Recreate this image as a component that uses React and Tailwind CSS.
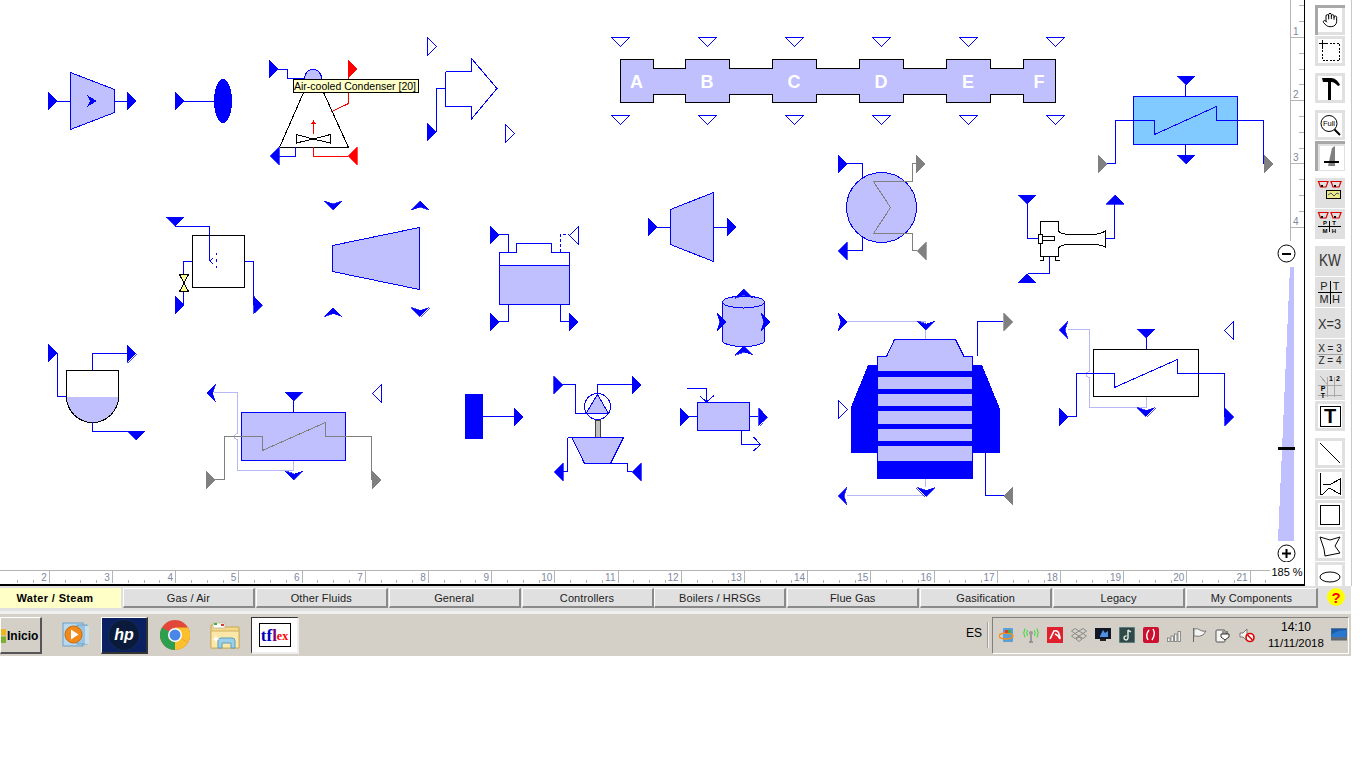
import React from 'react';
import { Hand } from 'lucide-react';

const B = '#0000ff', F = '#c0c0ff', G = '#808080', R = '#ff0000', LB = '#b8b8f4', K = '#000000';

function P({ d, x, y, c = B, o, ch }) {
  let pts;
  if (d === 'R') pts = ch ? [[x, y], [x + 9, y + 9], [x, y + 18], [x + 3, y + 9]] : [[x, y], [x + 9, y + 9], [x, y + 18]];
  if (d === 'L') pts = ch ? [[x + 9, y], [x, y + 9], [x + 9, y + 18], [x + 6, y + 9]] : [[x + 9, y], [x, y + 9], [x + 9, y + 18]];
  if (d === 'D') pts = ch ? [[x, y], [x + 9, y + 3], [x + 18, y], [x + 9, y + 9]] : [[x, y], [x + 18, y], [x + 9, y + 9]];
  if (d === 'U') pts = ch ? [[x + 9, y], [x + 18, y + 9], [x + 9, y + 6], [x, y + 9]] : [[x + 9, y], [x + 18, y + 9], [x, y + 9]];
  return <polygon points={pts.map(p => p.join(',')).join(' ')} fill={o ? 'none' : c} stroke={c} strokeWidth={o ? 1 : 0.7} />;
}
const L = ({ p, c = B, w = 1, dash }) => <polyline points={p} fill="none" stroke={c} strokeWidth={w} strokeDasharray={dash} />;
const Pg = ({ p, f = F, c = B, w = 1 }) => <polygon points={p} fill={f} stroke={c} strokeWidth={w} />;
const Bx = ({ x, y, w, h, f = 'none', c = B }) => <rect x={x} y={y} width={w} height={h} fill={f} stroke={c} strokeWidth="1" />;

const headerBody = '620.5,59.5 653.5,59.5 653.5,68.5 685.5,68.5 685.5,59.5 729.5,59.5 729.5,68.5 772.5,68.5 772.5,59.5 816.5,59.5 816.5,68.5 859.5,68.5 859.5,59.5 903.5,59.5 903.5,68.5 946.5,68.5 946.5,59.5 990.5,59.5 990.5,68.5 1023.5,68.5 1023.5,59.5 1055.5,59.5 1055.5,102.5 1023.5,102.5 1023.5,94.5 990.5,94.5 990.5,102.5 946.5,102.5 946.5,94.5 903.5,94.5 903.5,102.5 859.5,102.5 859.5,94.5 816.5,94.5 816.5,102.5 772.5,102.5 772.5,94.5 729.5,94.5 729.5,102.5 685.5,102.5 685.5,94.5 653.5,94.5 653.5,102.5 620.5,102.5';

function Diagram() {
  return (
    <svg width="1290" height="570" viewBox="0 0 1290 570" shapeRendering="crispEdges" className="block">
      {/* turbine 1 */}
      <P d="R" x={48} y={92} />
      <L p="57,101.5 70,101.5" />
      <Pg p="70.5,72.5 114.5,89.5 114.5,112.5 70.5,129.5" />
      <polygon points="87,95 97,101 87,107 90,101" fill={B} />
      <L p="115,101.5 127,101.5" />
      <P d="R" x={127} y={92} />
      {/* ellipse */}
      <P d="R" x={175} y={92} />
      <L p="184,101.5 214,101.5" />
      <ellipse cx="223" cy="101" rx="9" ry="22" fill={B} />
      {/* ACC */}
      <P d="R" x={269} y={60} />
      <L p="278,69.5 287.5,69.5 287.5,78.5 304,78.5" />
      <path d="M304.5 79 C305 72 309 69.5 313 69.5 C317 69.5 321.5 72 321.5 79 Z" fill={F} stroke={B} />
      <P d="R" x={348} y={60} c={R} />
      <L p="348.5,78 348.5,103.5 331,112" c={R} />
      <L p="279.5,147.5 305.5,88 321.5,88 348.5,147.5 279.5,147.5" c={K} />
      <path d="M296.5 134.5 L313 139 L330.5 134.5 L330.5 143 L313 139 L296.5 143 Z" fill="none" stroke={K} />
      <L p="313.5,134 313.5,123" c={R} />
      <polygon points="311,124 313.5,120 316,124" fill={R} />
      <P d="L" x={270} y={147} />
      <L p="279,156.5 295.5,156.5 295.5,147" />
      <L p="313.5,147 313.5,156.5 348,156.5" c={R} />
      <P d="L" x={348} y={147} c={R} />
      {/* outline arrow */}
      <P d="R" x={427.5} y={37.5} o />
      <P d="R" x={505.5} y={124.5} o />
      <L p="445.5,71.5 471.5,71.5 471.5,58.5 497,88.5 471.5,119 471.5,106.5 445.5,106.5 445.5,71.5" />
      <L p="436.5,132 436.5,88.5 445.5,88.5" />
      <P d="R" x={427} y={123} />
      {/* header */}
      <polygon points={headerBody} fill={F} stroke={K} strokeWidth="1" />
      {[620, 707, 794, 881, 968, 1055].map(x => <P key={x} d="D" x={x - 8.5} y={37.5} o />)}
      {[620, 707, 794, 881, 968, 1055].map(x => <P key={x} d="D" x={x - 8.5} y={115.5} o />)}
      <g fill="#ffffff" fontFamily="'Liberation Sans', sans-serif" fontWeight="700" fontSize="18" textAnchor="middle" shapeRendering="auto">
        <text x="636.5" y="88">A</text>
        <text x="707" y="88">B</text>
        <text x="794" y="88">C</text>
        <text x="881" y="88">D</text>
        <text x="968" y="88">E</text>
        <text x="1039" y="88">F</text>
      </g>
      {/* blue exchanger */}
      <Bx x={1133.5} y={96.5} w={104} h={48} f="#80caff" />
      <P d="D" x={1177} y={76} />
      <L p="1185.5,85 1185.5,96" />
      <L p="1185.5,144 1185.5,155" />
      <P d="D" x={1177} y={155} />
      <L p="1107,163.5 1115.5,163.5 1115.5,120.5 1154.5,120.5 1154.5,134.5 1216.5,106.5 1216.5,120.5 1263.5,120.5 1263.5,163.5" />
      <P d="R" x={1098} y={155} c={G} />
      <P d="R" x={1264} y={155} c={G} />
      {/* mixer */}
      <P d="D" x={166} y={217} />
      <L p="175,226.5 209.5,226.5 209.5,261" />
      <L p="213,258 210,261 213,264" />
      <L p="216.5,253 216.5,255" />
      <L p="216.5,259 216.5,262" />
      <L p="216.5,266 216.5,268" />
      <rect x="192.5" y="235.5" width="52" height="52" fill="none" stroke={K} />
      <L p="192,261.5 183.5,261.5 183.5,274" />
      <polygon points="179.5,274.5 188.5,274.5 184,283 188.5,291.5 179.5,291.5 184,283" fill="#ffff99" stroke={K} />
      <L p="183.5,292 183.5,305" />
      <P d="R" x={175} y={296} />
      <L p="244.5,261.5 253.5,261.5 253.5,305" />
      <P d="R" x={253.5} y={296} />
      {/* cone */}
      <Pg p="332.5,245.5 419.5,227.5 419.5,289.5 332.5,271.5" />
      <P d="D" x={324} y={201} ch />
      <P d="U" x={411} y={201} ch />
      <P d="U" x={324} y={307.5} ch />
      <P d="D" x={411} y={307.5} ch />
      {/* tank */}
      <P d="R" x={490} y={226} />
      <L p="499,234.5 508.5,234.5 508.5,252" />
      <rect x="499.5" y="265.5" width="70" height="39" fill={F} />
      <path d="M516.5 252.5 V243.5 H551.5 V252.5 H569.5 V304.5 H499.5 V252.5 Z" fill="none" stroke={B} />
      <L p="499.5,265.5 569.5,265.5" />
      <L p="560.5,252 560.5,234.5 569,234.5" dash="3 2" />
      <P d="L" x={569.5} y={226.5} o />
      <P d="R" x={490} y={313} />
      <L p="499,321.5 508.5,321.5 508.5,304" />
      <L p="560.5,304 560.5,321.5 569,321.5" />
      <P d="R" x={569} y={313} />
      {/* turbine 3 */}
      <P d="R" x={648} y={218} />
      <L p="657,227.5 670,227.5" />
      <Pg p="670.5,209.5 713.5,192.5 713.5,261.5 670.5,244.5" />
      <L p="714,227.5 727,227.5" />
      <P d="R" x={727} y={218} />
      {/* circle exch */}
      <circle cx="881.5" cy="207.5" r="35" fill={F} stroke={B} />
      <P d="R" x={838} y={155} />
      <L p="846,163.5 862.5,163.5 862.5,177" />
      <P d="L" x={838} y={242} />
      <L p="846,250.5 862.5,250.5 862.5,236" />
      <L p="916,163.5 912.5,163.5 912.5,181.5 873.5,181.5 890.5,207.5 873.5,233.5 912.5,233.5 912.5,250.5 917,250.5" c={G} />
      <P d="R" x={916} y={155} c={G} />
      <P d="L" x={917} y={242} c={G} />
      {/* horn */}
      <P d="D" x={1018} y={195} />
      <L p="1027.5,204 1027.5,238.5 1038,238.5" />
      <P d="U" x={1106} y={195} />
      <L p="1114.5,204 1114.5,238.5 1105,238.5" />
      <path d="M1040.5 234 V221.5 H1058.5 V231 Q1060 234 1070 234.5 H1093 Q1102 234 1105.5 230.5 V247.5 Q1102 244.5 1093 244.5 H1070 Q1060 244.5 1058.5 248 V256.5 H1040.5 V243" fill="none" stroke={K} />
      <rect x="1038.5" y="234.5" width="4" height="9" fill="none" stroke={K} />
      <L p="1043,236.5 1054,236.5" c={K} />
      <L p="1043,240.5 1054,240.5" c={K} />
      <L p="1054.5,236 1054.5,241" c={K} />
      <L p="1043.5,256 1043.5,260.5 1040,260.5" c={K} />
      <L p="1055.5,256 1055.5,260.5 1060,260.5" c={K} />
      <P d="U" x={1018} y={273.5} />
      <L p="1028,273.5 1049.5,273.5 1049.5,257" />
      {/* drum */}
      <rect x="722.5" y="302" width="42" height="39" fill={F} />
      <ellipse cx="743.5" cy="340.5" rx="21" ry="6" fill={F} stroke={B} />
      <rect x="723" y="302" width="41" height="38" fill={F} />
      <L p="722.5,302 722.5,341" />
      <L p="764.5,302 764.5,341" />
      <ellipse cx="743.5" cy="302" rx="21" ry="6" fill={F} stroke={B} />
      <P d="U" x={734.5} y={289} ch />
      <P d="U" x={734.5} y={346} ch />
      <P d="R" x={717} y={313} ch />
      <P d="R" x={761} y={313} ch />
      {/* flash */}
      <P d="R" x={48} y={344} />
      <L p="57.5,353 57.5,396.5 66,396.5" />
      <path d="M66.5 396.5 A26 26 0 0 0 118.5 396.5 Z" fill={F} />
      <path d="M66.5 396.5 V370.5 H118.5 V396.5 A26 26 0 0 1 66.5 396.5" fill="none" stroke={K} />
      <L p="92.5,370 92.5,353.5 127,353.5" />
      <P d="R" x={127} y={344.5} />
      <L p="92.5,422 92.5,431.5 127,431.5" />
      <P d="D" x={127} y={431} />
      {/* economizer */}
      <Bx x={241.5} y={412.5} w={104} h={48} f={F} />
      <P d="D" x={284.5} y={392} />
      <L p="293.5,401 293.5,412" />
      <L p="214,392.5 237.5,392.5 237.5,433 234,435.5 234,438 237.5,440 237.5,470.5 293.5,470.5 293.5,461" c={LB} />
      <P d="L" x={206.5} y={384} ch />
      <P d="D" x={284.5} y={471} ch />
      <P d="L" x={372.5} y={384.5} o />
      <L p="215,479.5 224.5,479.5 224.5,436.5 262.5,436.5 262.5,450.5 325.5,422.5 325.5,436.5 371.5,436.5 371.5,480" c={G} />
      <P d="R" x={206} y={471} c={G} />
      <P d="R" x={372} y={471} c={G} />
      {/* block */}
      <rect x="465" y="394" width="18" height="45" rx="1" fill={B} />
      <L p="483,416.5 514,416.5" />
      <P d="R" x={514} y={408} />
      {/* pump turbine */}
      <P d="R" x={553.5} y={376} />
      <L p="562,384.5 575.5,384.5 575.5,413.5 586,413.5" />
      <circle cx="597.5" cy="406.5" r="13" fill="#ffffff" stroke={B} />
      <Pg p="597.5,394.5 586,413.5 608.5,413.5" />
      <L p="597.5,394 597.5,384.5 632,384.5" />
      <P d="R" x={632} y={376} />
      <rect x="595.5" y="420" width="4.5" height="17" fill="#c0c0c0" stroke="#404040" />
      <L p="567.5,437.5 623.5,437.5" />
      <Pg p="572,437.5 623.5,437.5 610.5,463.5 584.5,463.5" />
      <L p="567.5,437.5 567.5,471.5 563,471.5" />
      <P d="L" x={554} y={463} />
      <L p="610.5,463.5 627.5,463.5 627.5,471.5 632,471.5" />
      <P d="L" x={632} y={463} />
      {/* small box */}
      <P d="R" x={680} y={408} />
      <L p="689,416.5 697,416.5" />
      <Bx x={697.5} y={402.5} w={52} h={28} f={F} />
      <L p="750,416.5 758,416.5" />
      <P d="R" x={758.5} y={408} />
      <L p="687,388.5 706.5,388.5 706.5,402" />
      <L p="700,396 706.5,402 714,395.5" />
      <L p="741.5,430.5 741.5,444.5 760.5,444.5" />
      <L p="753.5,437 760.5,444.5 753.5,451" />
      {/* big unit */}
      <L p="847,321.5 925.5,321.5 925.5,339" c={LB} />
      <P d="R" x={838} y={313} ch />
      <P d="D" x={916.5} y={321} ch />
      <polygon points="868,365 982,365 1000,409 1000,453 851,453 851,407" fill={B} />
      <rect x="877" y="371" width="96" height="108" fill={B} />
      <Pg p="886.5,356.5 894.5,339.5 955.5,339.5 964,356.5 972.5,356.5 972.5,371 877.5,371 877.5,356.5" />
      <rect x="878" y="377" width="94" height="12" fill={F} />
      <rect x="878" y="394" width="94" height="12" fill={F} />
      <rect x="878" y="411" width="94" height="13" fill={F} />
      <rect x="878" y="429" width="94" height="12" fill={F} />
      <rect x="878" y="446" width="94" height="15" fill={F} />
      <L p="977.5,356 977.5,321.5 1003,321.5" />
      <P d="R" x={1003.5} y={313} c={G} />
      <L p="985.5,453 985.5,495.5 1004,495.5" />
      <P d="L" x={1003.5} y={487} c={G} />
      <L p="925.5,479 925.5,487" c={LB} />
      <L p="925,495.5 847,495.5" c={LB} />
      <P d="D" x={916.5} y={487.5} ch />
      <P d="L" x={838} y={487} ch />
      <P d="R" x={838.5} y={400.5} o />
      {/* black econ */}
      <rect x="1093.5" y="349.5" width="105" height="47" fill="none" stroke={K} />
      <P d="D" x={1137} y={329} />
      <L p="1146.5,338 1146.5,349" />
      <L p="1068,329.5 1089.5,329.5 1089.5,371 1086,373 1086,376 1089.5,378 1089.5,407.5 1146.5,407.5 1146.5,397" c={LB} />
      <P d="L" x={1059} y={321} ch />
      <P d="D" x={1137} y={407.5} ch />
      <P d="L" x={1224.5} y={321.5} o />
      <L p="1067,416.5 1076.5,416.5 1076.5,373.5 1114.5,373.5 1114.5,387.5 1177.5,359.5 1177.5,373.5 1224.5,373.5 1224.5,416.5" />
      <P d="R" x={1059} y={408} />
      <P d="R" x={1224.5} y={408} />
    </svg>
  );
}

function RightRuler() {
  const minors = [5.4, 21.2, 52.8, 68.6, 84.4, 116, 131.8, 147.6, 179.2, 195, 210.8];
  const majors = [[1, 37], [2, 100], [3, 163], [4, 227]];
  return (
    <svg width="14" height="241" viewBox="0 0 14 241" shapeRendering="crispEdges" className="block">
      <line x1="0.5" y1="0" x2="0.5" y2="241" stroke="#b4b4b4" />
      {minors.map(y => <line key={y} x1="9" x2="14" y1={Math.round(y) + 0.5} y2={Math.round(y) + 0.5} stroke="#b4b4b4" />)}
      {majors.map(([n, y]) => <line key={n} x1="0" x2="14" y1={y + 0.5} y2={y + 0.5} stroke="#b4b4b4" />)}
      {majors.map(([n, y]) => <text key={n} x="3" y={y - 2} fontSize="10" fill="#8088a0" fontFamily="'Liberation Sans', sans-serif" shapeRendering="auto">{n}</text>)}
    </svg>
  );
}

function BottomRuler() {
  const nums = Array.from({ length: 20 }, (_, i) => i + 2);
  const ticks = [];
  for (let i = -2; i < 80; i++) {
    const x = 48.7 + 15.8 * i;
    if (i % 4 !== 0 && x > 0 && x < 1268) ticks.push(Math.round(x));
  }
  return (
    <svg width="1270" height="14" viewBox="0 0 1270 14" shapeRendering="crispEdges" className="block">
      <line x1="0" y1="0.5" x2="1270" y2="0.5" stroke="#b4b4b4" />
      {ticks.map(x => <line key={x} x1={x + 0.5} x2={x + 0.5} y1="10" y2="13" stroke="#b4b4b4" />)}
      {nums.map(n => {
        const x = 48.7 + 63.2 * (n - 2);
        return (
          <g key={n}>
            <line x1={Math.round(x) + 0.5} x2={Math.round(x) + 0.5} y1="0" y2="13" stroke="#b4b4b4" />
            <text x={x - 2} y="11" textAnchor="end" fontSize="10" fill="#8088a0" fontFamily="'Liberation Sans', sans-serif" shapeRendering="auto">{n}</text>
          </g>
        );
      })}
    </svg>
  );
}

function ZoomControl() {
  return (
    <div className="absolute right-0 bottom-0 w-[34px] h-[343px] flex flex-col items-center">
      <svg width="34" height="300" viewBox="0 0 34 300" shapeRendering="crispEdges" className="block">
        <circle cx="16.5" cy="12.5" r="8.5" fill="#fff" stroke={K} shapeRendering="auto" />
        <rect x="12" y="11.5" width="9" height="2" fill={K} />
        <polygon points="20,26 24,26 24,300 8,300" fill={F} />
        <rect x="8" y="206" width="17" height="3" fill={K} />
      </svg>
      <svg width="34" height="21" viewBox="0 0 34 21" className="block">
        <circle cx="16.5" cy="12.5" r="8.5" fill="#fff" stroke={K} />
        <rect x="12" y="11.5" width="9" height="2" fill={K} />
        <rect x="15.5" y="8" width="2" height="9" fill={K} />
      </svg>
      <div className="w-full h-[22px] bg-white pt-[3px] text-[11px] leading-[14px] text-black text-center whitespace-nowrap">185 %</div>
    </div>
  );
}

function ToolBtn({ children, mt, pressed, white = true, h = 'h-[30px]' }) {
  const cls = pressed
    ? 'border-t-[3px] border-l-[3px] border-t-[#a8a8a8] border-l-[#a8a8a8]'
    : '';
  return (
    <div className={`w-[30px] ${h} shrink-0 bg-[#e0e0e0] flex items-center justify-center ${mt ? 'mt-[7px]' : 'mt-px'} ${cls}`}>
      {white
        ? <div className="w-[24px] h-[24px] bg-white flex items-center justify-center">{children}</div>
        : children}
    </div>
  );
}

const Heat = () => (
  <g fill="none">
    <path d="M1.5 2.5 H11 L9 8 H3.5 Z" stroke="#e00000" strokeWidth="1.2" />
    <path d="M14 2.5 H24 L22 8 H16 Z" stroke="#e00000" strokeWidth="1.2" />
    <rect x="4" y="6" width="2" height="2" fill={K} />
    <rect x="17" y="6" width="2" height="2" fill={K} />
  </g>
);

function Toolbar() {
  return (
    <div className="w-[47px] h-[586px] overflow-hidden bg-white border-r border-[#c8c8c8] pl-[10px] pt-[5px] flex flex-col">
      <div className="w-[30px] h-[30px] shrink-0 bg-[#e0e0e0] border-t-[3px] border-l-[3px] border-t-[#a8a8a8] border-l-[#a8a8a8] flex items-start">
        <div className="w-[24px] h-[24px] bg-white flex items-center justify-center"><Hand size={16} strokeWidth={1.5} color="#000" /></div>
      </div>
      <ToolBtn>
        <svg width="24" height="24" viewBox="0 0 24 24" shapeRendering="crispEdges">
          <rect x="4.5" y="4.5" width="17" height="17" fill="none" stroke={K} strokeDasharray="2 1.5" />
          <path d="M4.5 1 V8 M1 4.5 H8" stroke={K} fill="none" />
        </svg>
      </ToolBtn>
      <ToolBtn mt>
        <svg width="24" height="24" viewBox="0 0 24 24">
          <polygon points="10,5 13,5 13,24 10,24" fill={K} />
          <path d="M4 2 H13 C17 2 20 5 22 9 L20 10 C18 8 16 6 13 6 H5 Z" fill={K} />
        </svg>
      </ToolBtn>
      <ToolBtn mt>
        <svg width="24" height="24" viewBox="0 0 24 24">
          <circle cx="11" cy="10.5" r="8" fill="none" stroke={K} />
          <text x="11" y="13" textAnchor="middle" fontSize="7.5" fontFamily="'Liberation Sans', sans-serif">Full</text>
          <path d="M16.5 16.5 L22 22" stroke={K} strokeWidth="2" />
        </svg>
      </ToolBtn>
      <ToolBtn pressed>
        <svg width="24" height="24" viewBox="0 0 24 24" className="bg-white">
          <polygon points="8,20 15,20 15,0 12,2" fill="#808080" />
          <rect x="4" y="15" width="15" height="2" fill={K} />
        </svg>
      </ToolBtn>
      <ToolBtn mt white={false}>
        <svg width="26" height="28" viewBox="0 0 26 28">
          <Heat />
          <rect x="9.5" y="11.5" width="14" height="8" fill="#e8e888" stroke={K} />
          <path d="M11 16 L14 14 L17 17 L20 14 L22 15" stroke="#556" fill="none" />
        </svg>
      </ToolBtn>
      <ToolBtn white={false}>
        <svg width="26" height="28" viewBox="0 0 26 28">
          <Heat />
          <path d="M1 16.5 H24 M12.5 11 V22" stroke={K} fill="none" />
          <g fontSize="6" fontWeight="700" fontFamily="'Liberation Sans', sans-serif" textAnchor="middle">
            <text x="8" y="15">P</text><text x="17" y="15">T</text>
            <text x="8" y="22.5">M</text><text x="17" y="22.5">H</text>
          </g>
        </svg>
      </ToolBtn>
      <ToolBtn mt white={false}>
        <span className="text-[16px] leading-none text-[#333] scale-x-[0.85]">KW</span>
      </ToolBtn>
      <ToolBtn white={false}>
        <svg width="26" height="28" viewBox="0 0 26 28" shapeRendering="crispEdges">
          <path d="M1 14.5 H25 M13.5 3 V26" stroke={K} fill="none" />
          <g fontSize="11" fontFamily="'Liberation Sans', sans-serif" textAnchor="middle" fill="#222" shapeRendering="auto">
            <text x="7" y="12">P</text><text x="19" y="12">T</text>
            <text x="7" y="25">M</text><text x="19" y="25">H</text>
          </g>
        </svg>
      </ToolBtn>
      <ToolBtn white={false}>
        <span className="text-[15px] leading-none text-[#333] whitespace-nowrap scale-x-[0.85]">X=3</span>
      </ToolBtn>
      <ToolBtn white={false}>
        <div className="flex flex-col items-center text-[10px] leading-[11px] text-[#222] whitespace-nowrap">
          <span className="border-b border-[#a0a0a0] px-px">X = 3</span>
          <span>Z = 4</span>
        </div>
      </ToolBtn>
      <ToolBtn white={false}>
        <svg width="26" height="28" viewBox="0 0 26 28" shapeRendering="crispEdges">
          <path d="M1 14.5 H25 M1 24.5 H25 M10.5 6 V26 M17.5 6 V26 M3 5 L10 13" stroke="#a8a8a8" fill="none" />
          <g fontSize="7" fontWeight="700" fontFamily="'Liberation Sans', sans-serif" textAnchor="middle" shapeRendering="auto">
            <text x="14" y="10">1</text><text x="21" y="10">2</text>
            <text x="6" y="20">P</text><text x="6" y="27">T</text>
          </g>
        </svg>
      </ToolBtn>
      <ToolBtn>
        <div className="w-[21px] h-[21px] border-[1.5px] border-black flex items-center justify-center text-[20px] leading-none font-bold text-black">T</div>
      </ToolBtn>
      <ToolBtn mt>
        <svg width="24" height="24" viewBox="0 0 24 24"><path d="M2 2 L22 22" stroke={K} fill="none" /></svg>
      </ToolBtn>
      <ToolBtn>
        <svg width="24" height="24" viewBox="0 0 24 24" shapeRendering="crispEdges"><path d="M2.5 1 V22 H5 L11 16 L22 22 V7 L13 12 H5" stroke={K} fill="none" /></svg>
      </ToolBtn>
      <ToolBtn>
        <svg width="24" height="24" viewBox="0 0 24 24" shapeRendering="crispEdges"><rect x="2.5" y="2.5" width="19" height="19" fill="none" stroke={K} /></svg>
      </ToolBtn>
      <ToolBtn>
        <svg width="24" height="24" viewBox="0 0 24 24"><path d="M2 3 L12 6 L22 3 L17 12 L22 19 L7 22 L6 15 L2 3" stroke={K} fill="none" /></svg>
      </ToolBtn>
      <ToolBtn>
        <svg width="24" height="24" viewBox="0 0 24 24"><ellipse cx="12" cy="12" rx="10" ry="5" stroke={K} fill="none" /></svg>
      </ToolBtn>
    </div>
  );
}

const tabs = ['Water / Steam', 'Gas / Air', 'Other Fluids', 'General', 'Controllers', 'Boilers / HRSGs', 'Flue Gas', 'Gasification', 'Legacy', 'My Components'];

function TabRow() {
  return (
    <div className="h-[25px] w-[1351px] bg-[#e0e0e0] relative flex pt-[2px] overflow-hidden">
      <div className="flex gap-[0.875px] -ml-[10px]">
        {tabs.map((t, i) => (
          <div
            key={t}
            className={`w-[132px] h-[20px] flex items-center justify-center text-[11px] text-[#222] ${i === 0 ? 'bg-[#ffffc8] font-bold tracking-[0.35px] text-black -translate-x-px' : 'tracking-[0.1px] bg-[#e0e0e0] pt-px border-t border-l border-white border-r-2 border-b-2 border-r-[#8a8a8a] border-b-[#8a8a8a]'}`}
          >
            {t}
          </div>
        ))}
      </div>
      <div className="absolute right-[6px] top-[2px] w-[18px] h-[18px] rounded-full bg-[#ffff00] flex items-center justify-center text-[15px] leading-none font-bold text-[#ff0000]">?</div>
    </div>
  );
}

function TrayIcon({ children }) {
  return <svg width="16" height="16" viewBox="0 0 16 16" className="shrink-0 block">{children}</svg>;
}

function Tray() {
  return (
    <div className="ml-[3px] w-[357px] h-[37px] border border-t-[#808080] border-l-[#808080] border-b-white border-r-white flex items-center pl-[6px] gap-[8px]">
      <TrayIcon>
        <rect x="4" y="1" width="10" height="14" rx="1" fill="#5a9fd8" />
        <ellipse cx="7" cy="9" rx="7" ry="3" fill="none" stroke="#f09020" strokeWidth="1.5" />
        <rect x="6" y="3" width="3" height="3" fill="#e04020" /><rect x="9" y="3" width="3" height="3" fill="#40b040" />
      </TrayIcon>
      <TrayIcon>
        <path d="M8 8 V15 M6 15 H10" stroke="#888" strokeWidth="1.5" fill="none" />
        <circle cx="8" cy="6" r="2" fill="#999" />
        <path d="M4.5 3 Q3 6 4.5 9 M11.5 3 Q13 6 11.5 9 M2 1.5 Q-0.5 6 2 10.5 M14 1.5 Q16.5 6 14 10.5" stroke="#39d833" fill="none" />
      </TrayIcon>
      <TrayIcon>
        <rect width="16" height="16" fill="#e0202c" />
        <path d="M3 12 L7 4 Q11 3 12 7 Q13 10 13 12 Q11 8 8 7" stroke="#fff" strokeWidth="1.6" fill="none" />
      </TrayIcon>
      <TrayIcon>
        <path d="M4 1.5 L8 4 L4 6.5 L0.5 4 Z M12 1.5 L15.5 4 L12 6.5 L8 4 Z M4 6.5 L8 9 L4 11.5 L0.5 9 Z M12 6.5 L15.5 9 L12 11.5 L8 9 Z M8 10 L11 12 L8 14.5 L5 12 Z" fill="#d4d0c8" stroke="#8a8a8a" />
      </TrayIcon>
      <TrayIcon>
        <rect y="1" width="16" height="11" fill="#101828" />
        <path d="M5 9 L8 3 L10 6 L13 4 V10 H5" fill="#5090e0" />
        <rect x="5" y="12" width="6" height="2" fill="#222" />
      </TrayIcon>
      <TrayIcon>
        <rect width="16" height="16" fill="#2f4a48" stroke="#8aa" />
        <path d="M9 3 V11 A2 2 0 1 1 7.5 9 M9 3 L12 5" stroke="#e8f0e8" strokeWidth="1.4" fill="none" />
      </TrayIcon>
      <TrayIcon>
        <rect width="16" height="16" rx="2" fill="#cc1030" />
        <path d="M6 3 Q2 8 5 13 M10 2 Q13 7 9 13" stroke="#fff" strokeWidth="1.4" fill="none" />
      </TrayIcon>
      <TrayIcon>
        <g fill="#f4f4f0" stroke="#777" strokeWidth="0.8">
          <rect x="0.5" y="11" width="2.5" height="3.5" /><rect x="4" y="9" width="2.5" height="5.5" /><rect x="7.5" y="7" width="2.5" height="7.5" /><rect x="11" y="4.5" width="2.5" height="10" />
        </g>
      </TrayIcon>
      <TrayIcon>
        <path d="M2.5 1 V15" stroke="#666" fill="none" />
        <path d="M3 2 Q7 1 9 3 Q12 5 15 4 L12 8 Q9 10 3 9 Z" fill="#f4f4f0" stroke="#777" />
      </TrayIcon>
      <TrayIcon>
        <rect x="1" y="3" width="9" height="12" rx="1" fill="#f4f4f0" stroke="#555" />
        <path d="M6 7 H14 V10 L10 13 L6 10 Z M8 4 V7 M12 4 V7" fill="#fff" stroke="#333" />
      </TrayIcon>
      <TrayIcon>
        <path d="M1 6 H4 L8 2 V14 L4 10 H1 Z" fill="#f4f4f0" stroke="#777" />
        <circle cx="11" cy="10.5" r="4" fill="#fff" stroke="#e00000" strokeWidth="1.6" />
        <path d="M8.5 8 L13.5 13" stroke="#e00000" strokeWidth="1.6" />
      </TrayIcon>
      <div className="w-[60px] ml-[3px] text-[12px] leading-[16px] text-black text-center flex flex-col items-center whitespace-nowrap">
        <span>14:10</span>
        <span className="text-[11.5px]">11/11/2018</span>
      </div>
      <svg width="16" height="14" viewBox="0 0 16 14" className="shrink-0 -ml-[3px]">
        <rect y="0.5" width="16" height="9" fill="#1c5aa8" stroke="#5a7a9a" />
        <path d="M1 6 L7 3 L15 2 V9 H1 Z" fill="#2878d0" />
        <rect y="9.5" width="16" height="3" fill="#606870" />
      </svg>
    </div>
  );
}

function Taskbar() {
  const raised = 'border-t border-l border-t-white border-l-white border-b-2 border-r-2 border-b-[#555] border-r-[#555]';
  return (
    <div className="h-[42px] w-[1351px] bg-[#d4d0c8] flex items-center justify-between pr-[2px] overflow-hidden">
      <div className="flex items-center h-[37px]">
        <div className={`w-[42px] h-[37px] flex items-center pt-[2px] text-[12px] font-bold text-black ${raised}`}>
          <svg width="5" height="14" viewBox="0 0 5 14" className="shrink-0 mr-[1px]">
            <rect width="5" height="6.5" fill="#e8b820" />
            <rect y="7.5" width="5" height="6.5" fill="#7cb030" />
          </svg>
          <span>Inicio</span>
        </div>
        <svg width="29" height="26" viewBox="0 0 29 26" className="ml-[19px]">
          <rect x="2" y="1" width="20" height="23" fill="#b8d8ee" stroke="#6aa0c8" />
          <rect x="16" y="3" width="10" height="19" fill="#9cc4e0" stroke="#6aa0c8" />
          <rect x="24" y="4" width="4" height="18" fill="#c8dfee" />
          <circle cx="12.5" cy="12.5" r="8.5" fill="#f28a1a" stroke="#c86808" />
          <polygon points="10,7.5 17.5,12.5 10,17.5" fill="#fff" />
        </svg>
        <div className="ml-[11px] w-[47px] h-[37px] bg-[#0b2060] flex items-center justify-center border-t border-l border-t-white border-l-white border-b-2 border-r-2 border-b-[#333] border-r-[#333]">
          <svg width="34" height="34" viewBox="0 0 34 34">
            <circle cx="17" cy="17" r="15.5" fill="#0a1a3a" stroke="#142a5a" />
            <text x="17" y="22" textAnchor="middle" fontSize="16" fontWeight="700" fontStyle="italic" fill="#ffffff" fontFamily="'Liberation Sans', sans-serif">hp</text>
          </svg>
        </div>
        <svg width="30" height="30" viewBox="0 0 30 30" className="ml-[12px]">
          <circle cx="15" cy="15" r="15" fill="#e2473a" />
          <path d="M15 15 L28 22.5 A15 15 0 0 1 15 30 Z" fill="#fbc02d" />
          <path d="M15 15 L15 30 A15 15 0 0 1 2 7.5 Z" fill="#2e9e4f" />
          <path d="M15 15 L28 22.5 A15 15 0 0 0 28 7.5 L15 7.5 Z" fill="#fbc02d" />
          <circle cx="15" cy="15" r="7" fill="#fff" />
          <circle cx="15" cy="15" r="5.5" fill="#4a86e8" />
        </svg>
        <svg width="30" height="29" viewBox="0 0 30 29" className="ml-[20px]">
          <path d="M1 4 H12 L14 6 H29 V27 H1 Z" fill="#f5d98a" stroke="#c8a850" />
          <rect x="3" y="2" width="12" height="5" fill="#fff" stroke="#c8c0a0" />
          <rect x="4" y="2" width="3" height="2" fill="#40b040" />
          <rect x="11" y="3" width="3" height="2" fill="#d04030" />
          <path d="M1 10 H29 V27 H1 Z" fill="#fbe8a8" stroke="#d0b060" />
          <path d="M8 27 V20 Q8 17 11 17 H22 Q25 17 25 20 V27 H21 V22 H12 V27 Z" fill="#9cd0e8" stroke="#5a9cc0" />
          <path d="M6 14 L7 17 L10 18 L7 19 L6 22 L5 19 L2 18 L5 17 Z" fill="#ffffff" />
        </svg>
        <div className="ml-[11px] w-[48px] h-[37px] bg-white border-t border-l border-t-[#333] border-l-[#333] border-b-2 border-r-2 border-b-[#eee] border-r-[#eee] flex items-center justify-center">
          <div className="w-[32px] h-[24px] border border-black flex items-end justify-center leading-none font-['Liberation_Serif',serif]">
            <span className="text-[17px] font-bold text-[#0000c0] leading-[21px]">tf</span>
            <span className="text-[17px] font-bold text-[#800080] leading-[21px]">l</span>
            <span className="text-[12px] font-bold text-[#ff0000] leading-[19px]">ex</span>
          </div>
        </div>
      </div>
      <div className="flex items-center h-[37px]">
        <span className="text-[12px] text-black -translate-y-[2px]">ES</span>
        <div className="ml-[5px] w-[2px] h-[26px] bg-[#f4f2ec] border-l border-[#a0a0a0]" />
        <Tray />
      </div>
    </div>
  );
}

export default function App() {
  return (
    <div className="w-[1352px] h-[656px] bg-white flex flex-col font-['Liberation_Sans',sans-serif] overflow-hidden">
      <div className="flex h-[586px]">
        <div className="w-[1305px] h-[586px] border-r border-b-2 border-black relative flex flex-col">
          <div className="flex h-[570px]">
            <div className="w-[1290px] relative">
              <Diagram />
              <div className="absolute left-[293px] top-[79px] h-[14px] w-[126px] bg-[#ffffc8] border border-black text-[10.5px] leading-[12px] whitespace-nowrap text-black overflow-hidden">
                Air-cooled Condenser [20]
              </div>
            </div>
            <RightRuler />
          </div>
          <BottomRuler />
          <ZoomControl />
        </div>
        <Toolbar />
      </div>
      <TabRow />
      <div className="h-[3px] bg-[#f0f0f0] w-[1351px]" />
      <Taskbar />
    </div>
  );
}
